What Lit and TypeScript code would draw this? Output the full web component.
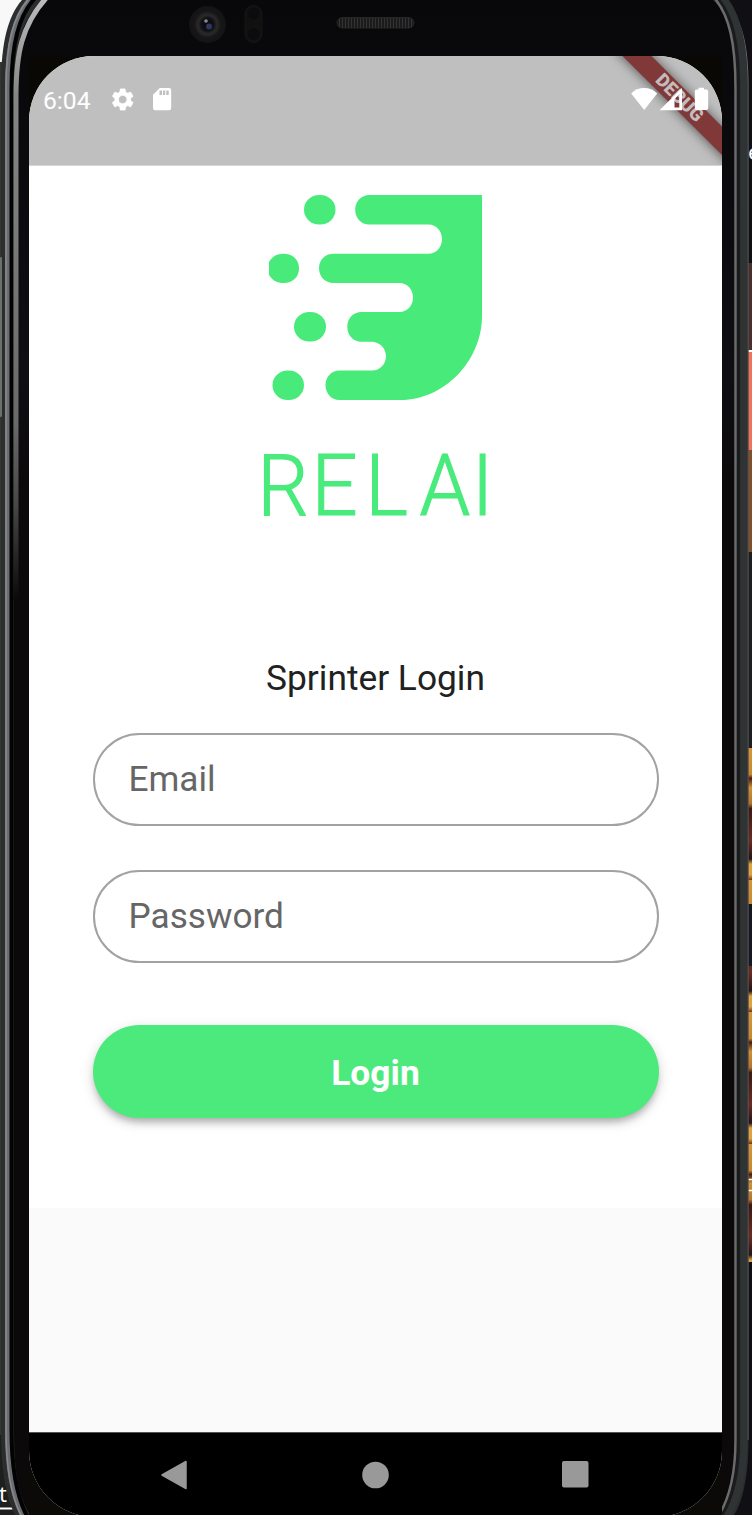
import { LitElement, html, svg, css } from "lit";
import { customElement } from "lit/decorators.js";

@customElement("phone-frame")
class PhoneFrame extends LitElement {
  static styles = css`
    :host { display: block; width: 752px; height: 1515px; }
    svg { display: block; }
    .mono { font: 22px "Noto Sans", sans-serif; fill: #fff; }
  `;

  rail(offset: number, width: number, color: string) {
    return svg`<path fill="none" stroke=${color} stroke-width=${width}
      d="M${offset + 23.5} -2C${offset + 7} 16 ${offset} 44 ${offset} 88V1430C${offset} 1464 ${offset + 5} 1498 ${offset + 17} 1519"/>`;
  }

  railRight(x: number, width: number, color: string) {
    return svg`<path fill="none" stroke=${color} stroke-width=${width}
      d="M${x - 21} -2C${x - 6} 16 ${x} 44 ${x} 88V1440C${x} 1474 ${x - 6} 1500 ${x - 19} 1519"/>`;
  }

  render() {
    return html`<svg width="752" height="1515" viewBox="0 0 752 1515">
      <defs>
        <linearGradient id="glare" gradientUnits="userSpaceOnUse" x1="0" y1="0" x2="0" y2="600">
          <stop offset="0" stop-color="#bcbcbc"/><stop offset=".16" stop-color="#858585"/>
          <stop offset=".7" stop-color="#6a6a6a"/><stop offset=".84" stop-color="#484848"/>
          <stop offset="1" stop-color="#0c090a"/>
        </linearGradient>
        <linearGradient id="bezel" x1="0" y1="0" x2="0" y2="1">
          <stop offset="0" stop-color="#08080a"/><stop offset=".25" stop-color="#0e0e13"/>
          <stop offset=".32" stop-color="#0c090a"/><stop offset="1" stop-color="#0b0909"/>
        </linearGradient>
        <radialGradient id="lens">
          <stop offset="0" stop-color="#07070b"/><stop offset=".35" stop-color="#111116"/>
          <stop offset=".5" stop-color="#29292b"/><stop offset=".62" stop-color="#222223"/>
          <stop offset=".7" stop-color="#171718"/><stop offset="1" stop-color="#131314"/>
        </radialGradient>
        <pattern id="mesh" width="3" height="3" patternUnits="userSpaceOnUse">
          <rect width="3" height="3" fill="#1b1b1b"/><rect width="1" height="3" fill="#333"/>
        </pattern>
        <linearGradient id="bread" x1="0" y1="748" x2="0" y2="880" gradientUnits="userSpaceOnUse" spreadMethod="repeat">
          <stop offset="0" stop-color="#d7953a"/><stop offset=".2" stop-color="#c8862e"/>
          <stop offset=".23" stop-color="#4b1d0d"/><stop offset=".3" stop-color="#d09034"/>
          <stop offset=".42" stop-color="#b8732a"/><stop offset=".46" stop-color="#3b1812"/>
          <stop offset=".7" stop-color="#6b2b22"/><stop offset=".84" stop-color="#251316"/>
          <stop offset=".88" stop-color="#e0a23c"/><stop offset=".96" stop-color="#e0a23c"/>
          <stop offset="1" stop-color="#762f14"/>
        </linearGradient>
      </defs>
      <rect width="752" height="1515" fill="#101014"/>
      <rect width="60" height="65" fill="#f8f8f8"/>
      <rect y="62" width="6" height="1373" fill="#333635"/>
      <rect y="1435" width="40" height="80" fill="#1e1e1f"/>
      <rect x="745" y="263" width="7" height="87" fill="#49302c"/>
      <rect x="745" y="350" width="7" height="2" fill="#fff"/>
      <rect x="745" y="352" width="7" height="98" fill="#ee735c"/>
      <rect x="745" y="450" width="7" height="102" fill="#80502c"/>
      <rect x="745" y="552" width="7" height="196" fill="#1c1d1f"/>
      <rect x="745" y="748" width="7" height="514" fill="url(#bread)"/>
      <rect x="745" y="904" width="7" height="62" fill="#151722"/>
      <path d="M748 1179.500h4M748 1190.500h4" stroke="#fff" stroke-width="1.500"/>
      <text class="mono" x="748" y="160">e</text>
      <text class="mono" x="-1" y="1502">t</text>
      <path d="M0 1508.500H13" stroke="#fff" stroke-width="2"/>
      <path fill="#2b2e2d" d="M22 0C8 16 1 42 1 86V1430C1 1466 5 1496 15 1515H734C744 1500 748.500 1470 748.500 1440V86C748.500 42 741 16 723 0Z"/>
      <path fill="none" stroke="#666" stroke-width="1" d="M723 0C741 16 748 42 748 86V1440"/>
      <rect y="257" width="2" height="160" rx="1" fill="#6c7170"/>
      ${this.rail(7.5, 5, "#6c6d72")}
      ${this.rail(6, 1.5, "#88898d")}
      ${this.rail(11.5, 4, "#030304")}
      <path fill="url(#bezel)" d="M43 0C20 20 14 52 14 96V1430C14 1470 18 1496 30 1515H724C733 1496 737 1470 737 1440V96C737 52 733 18 713 0Z"/>
      <path fill="none" stroke="url(#glare)" stroke-width="5" d="M48 -4C21 25 16 55 16 96V600"/>
      ${this.railRight(744, 7, "#303333")}
      ${this.railRight(738.5, 3, "#191b1c")}
      ${this.railRight(735.5, 2.5, "#6b6b6c")}
      <path d="M29 56H722V130H29Z" fill="#090805"/>
      <path d="M29 1450H722V1515H29Z" fill="#0b0a07"/>
      <circle cx="207.500" cy="24.500" r="18.500" fill="url(#lens)"/>
      <circle cx="209" cy="26.500" r="3" fill="#2e385f"/>
      <circle cx="206" cy="21" r="1.800" fill="#8c8a92"/>
      <rect x="245" y="5.500" width="17" height="37" rx="8.500" fill="#111112" stroke="#161617"/>
      <circle cx="253.500" cy="13.500" r="6" fill="#0c0c0d"/>
      <circle cx="253.500" cy="34" r="6" fill="#0c0c0d"/>
      <rect x="337" y="17.500" width="77" height="10.500" rx="5.250" fill="url(#mesh)" stroke="#272727"/>
    </svg>`;
  }
}

@customElement("relai-logo")
class RelaiLogo extends LitElement {
  static styles = css`
    :host { display: block; width: 241px; height: 330px; }
    svg { display: block; overflow: visible; }
    .word { font: 300 85.5px Roboto, sans-serif; fill: #48eb7c; stroke: #48eb7c; stroke-width: 1.1; }
  `;
  render() {
    return html`<svg width="241" height="330" viewBox="255 190 241 330">
      <g fill="#48eb7a">
        <rect x="304" y="195" width="31.500" height="29.500" rx="15.200" ry="14.750"/>
        <path d="M269 262C273 256 277 253.700 283.500 253.700C293 253.700 299 260 299 268.300C299 277 293 283 283.500 283C277 283 273 281 269 275Z"/>
        <rect x="294" y="312" width="32" height="29.500" rx="15.400" ry="14.750"/>
        <rect x="272.500" y="370.500" width="31.500" height="29.500" rx="15.200" ry="14.750"/>
        <path d="M369.500 195H482V316C482 361 444 400 401 400H339.500C331 400 325.500 393 325.500 385.200S331 370.500 339.500 370.500H372C380 370.500 386 364 386 356.200S380 341.700 371 341.700H361.500C353 341.700 347.300 335 347.300 326.700S353 312 361.500 312H399.500C407.500 312 413 305.500 413 297.500S407.500 283 399.500 283H333.500C325 283 319 276.500 319 268.300S325 253.700 333.500 253.700H428.500C436.500 253.700 442 247 442 239.200S436.500 224.500 428.500 224.500H369.500C361 224.500 355.200 218 355.200 209.700S361 195 369.500 195Z"/>
      </g>
      <text class="word" transform="scale(.95 1)" y="515.200" x="270.800 328 384.500 441.700 496.500">RELAI</text>
    </svg>`;
  }
}

@customElement("app-root")
class AppRoot extends LitElement {
  static styles = css`
    :host { display: block; position: relative; width: 752px; height: 1515px; overflow: hidden; font-family: Roboto, sans-serif; }
    .device { position: absolute; inset: 0; }
    .stage { position: relative; box-sizing: border-box; height: 1515px; padding: 56px 30px 0 29px; }
    .screen { position: relative; display: flex; flex-direction: column; height: 1461px; border-radius: 65px 65px 66px 66px; overflow: hidden; background: #fafafa; }
    .status { display: flex; align-items: flex-start; height: 109px; background: #bfbfbf; border-bottom: 1px solid #d5d5d5; box-sizing: content-box; }
    .clock { margin: 30px 0 0 14px; color: #fff; font-size: 24.7px; line-height: 30px; width: 68px; }
    .ribbon { position: absolute; inset: 0 0 auto auto; }
    .glyphs { position: relative; flex: none; margin-top: 30px; }
    .right { margin-left: auto; margin-right: 12px; }
    .ribbon-text { font: 900 18.5px Roboto, sans-serif; fill: #c4bcbc; }
    .page { display: flex; flex-direction: column; align-items: center; box-sizing: border-box; height: 1042px; background: #fff; padding: 24px 63px 0; }
    .heading { margin: 137px 0 0; font-size: 35.3px; font-weight: 400; line-height: 42px; color: #212121; white-space: nowrap; }
    .form { display: flex; flex-direction: column; width: 566px; margin-top: 34px; }
    .field { box-sizing: border-box; width: 100%; height: 93px; margin: 0 0 44px; padding: 0 34px 2px; border: 2px solid #a2a2a2; border-radius: 47px; background: #fff; font: 35.2px Roboto, sans-serif; color: #222; outline: none; }
    .field::placeholder { color: #666; opacity: 1; }
    .submit { height: 93px; margin: 18px 0 0; padding: 2px 0 0; border: 0; border-radius: 47px; background: #4cea7c; color: #fff; font: 700 35.4px Roboto, sans-serif; box-shadow: 0 6px 7px -2px rgba(0,0,0,.22), 0 4px 13px rgba(0,0,0,.16); }
    .nav { display: flex; justify-content: space-between; align-items: center; box-sizing: border-box; height: 85px; margin-top: auto; padding: 0 133px 1px 132px; background: #000; border-top: 1px solid #555; }
  `;

  render() {
    return html`
      <phone-frame class="device"></phone-frame>
      <div class="stage">
        <main class="screen">
          <header class="status">
            <svg class="ribbon" width="130" height="109" viewBox="592 56 130 109">
              <defs><filter id="soft" x="-30%" y="-30%" width="160%" height="160%"><feGaussianBlur stdDeviation="6"/></filter></defs>
              <path d="M612 46H641L740 145V174Z" fill="#000" opacity=".58" filter="url(#soft)"/>
              <path d="M622.500 56H651.500L722 126.500V155Z" fill="#803838"/>
              <text class="ribbon-text" text-anchor="middle" transform="translate(675.300 102) rotate(45)">DEBUG</text>
            </svg>
            <span class="clock">6:04</span>
            <svg class="glyphs" width="64" height="28" viewBox="111 86 64 28" fill="#fff">
              <path transform="translate(109.300 86) scale(1.120)" stroke="#fff" stroke-width=".3" d="M19.140 12.940c.040-.300.060-.610.060-.940s-.020-.640-.070-.940l2.030-1.580a.49.49 0 0 0 .120-.610l-1.920-3.320a.488.488 0 0 0-.590-.220l-2.390.960a7.020 7.020 0 0 0-1.620-.940l-.360-2.540a.484.484 0 0 0-.480-.410h-3.840c-.240 0-.430.170-.470.410l-.360 2.540c-.590.240-1.130.570-1.620.940l-2.390-.960a.48.48 0 0 0-.590.220L2.740 8.870c-.120.210-.080.470.120.610l2.030 1.580c-.050.300-.090.630-.090.940s.020.640.070.940l-2.030 1.580a.49.49 0 0 0-.120.610l1.920 3.320c.120.220.370.290.590.220l2.390-.960c.500.380 1.030.700 1.620.940l.360 2.540c.050.240.240.410.480.410h3.840c.240 0 .440-.170.470-.410l.360-2.540c.590-.240 1.130-.560 1.620-.940l2.390.960c.220.080.470 0 .590-.220l1.920-3.320c.120-.220.070-.470-.120-.610l-2.010-1.580zM12 15.600A3.610 3.610 0 0 1 8.400 12c0-1.980 1.620-3.600 3.600-3.600s3.600 1.620 3.600 3.600-1.620 3.600-3.600 3.600z"/>
              <path fill-rule="evenodd" d="M159.800 88H169a2.200 2.200 0 0 1 2.200 2.200V108a2.200 2.200 0 0 1-2.200 2.200H155.200A2.200 2.200 0 0 1 153 108V94.800ZM159.500 90.500V95H162V90.500ZM163 90.500V95H165.200V90.500ZM166.300 90.500V95H168.700V90.500Z"/>
            </svg>
            <svg class="glyphs right" width="80" height="28" viewBox="630 86 80 28" fill="#fff">
              <path d="M631.200 93.500C638 86.300 650 86.300 657.200 93.500L644.200 110Z"/>
              <path fill-rule="evenodd" d="M682 88V110.300H659.500ZM674.500 99V107.500H679.300V94.300Z"/>
              <path d="M698.500 89.500V87.700H704V89.500H706.500A1.700 1.700 0 0 1 708.200 91.200V108.300A1.700 1.700 0 0 1 706.500 110H696.500A1.700 1.700 0 0 1 694.800 108.300V91.200A1.700 1.700 0 0 1 696.500 89.500Z"/>
            </svg>
          </header>
          <section class="page">
            <relai-logo></relai-logo>
            <h1 class="heading">Sprinter Login</h1>
            <div class="form">
              <input class="field" type="text" placeholder="Email">
              <input class="field" type="password" placeholder="Password">
              <button class="submit">Login</button>
            </div>
          </section>
          <nav class="nav">
            <svg width="26" height="30" viewBox="0 0 26 30"><path d="M25 1.500V28.500L1 15Z" fill="#999" stroke="#999" stroke-linejoin="round" stroke-width="1.500"/></svg>
            <svg width="28" height="28"><circle cx="14.500" cy="14" r="13.300" fill="#999"/></svg>
            <svg width="27" height="27"><rect width="26.500" height="26.500" rx="2" fill="#999"/></svg>
          </nav>
        </main>
      </div>`;
  }
}
